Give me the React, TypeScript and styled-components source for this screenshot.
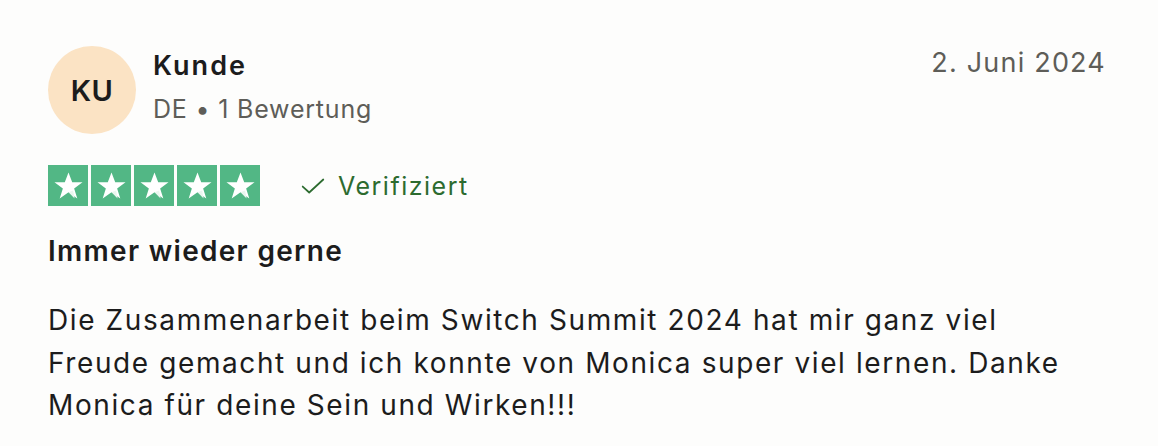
import React, { FC } from "react";
import styled, { createGlobalStyle } from "styled-components";

const GlobalStyle = createGlobalStyle`
  html, body {
    margin: 0;
    padding: 0;
    background: #fdfdfc;
  }
  * {
    box-sizing: border-box;
  }
`;

const StarIcon: FC = () => (
  <svg width="33" height="33" viewBox="0 0 24 24">
    <path
      d="M12 2.5l2.7 7.1h7.5l-6.1 4.5 2.3 7.3L12 16.9 5.6 21.4l2.3-7.3L1.8 9.6h7.5z"
      fill="#fff"
    />
    <path d="M12 16.9l3.4-1.2 1 5.7z" fill="#eaf6ef" />
  </svg>
);

const CheckIcon: FC = () => (
  <svg width="26" height="26" viewBox="0 0 24 24" fill="none">
    <path
      d="M2.5 12.5l6 5.5L21.5 6"
      stroke="#2c6b2f"
      strokeWidth="1.6"
      strokeLinecap="round"
      strokeLinejoin="round"
    />
  </svg>
);

const App: FC = () => {
  return (
    <>
      <GlobalStyle />
      <Review>
        <Header>
          <Avatar>KU</Avatar>
          <Consumer>
            <Name>Kunde</Name>
            <Meta>DE • 1 Bewertung</Meta>
          </Consumer>
          <Date>2. Juni 2024</Date>
        </Header>
        <RatingRow>
          <Stars>
            {[0, 1, 2, 3, 4].map((i) => (
              <StarBox key={i}>
                <StarIcon />
              </StarBox>
            ))}
          </Stars>
          <Verified>
            <CheckIcon />
            Verifiziert
          </Verified>
        </RatingRow>
        <Title>Immer wieder gerne</Title>
        <Body>
          Die Zusammenarbeit beim Switch Summit 2024 hat mir ganz viel
          <br />
          Freude gemacht und ich konnte von Monica super viel lernen. Danke
          <br />
          Monica für deine Sein und Wirken!!!
        </Body>
      </Review>
    </>
  );
};

export default App;

const Review = styled.article`
  width: 1158px;
  height: 446px;
  padding: 46px 52px 0 48px;
  font-family: Inter, "Noto Sans", sans-serif;
  color: #1c1c1c;
  display: flex;
  flex-direction: column;
`;

const Header = styled.header`
  display: flex;
  align-items: flex-start;
`;

const Avatar = styled.div`
  width: 88px;
  height: 88px;
  border-radius: 50%;
  background: #fbe3c4;
  display: flex;
  align-items: center;
  justify-content: center;
  font-size: 29px;
  font-weight: 600;
  letter-spacing: 0.5px;
  color: #1c1c1c;
  flex-shrink: 0;
`;

const Consumer = styled.div`
  margin-left: 17px;
  display: flex;
  flex-direction: column;
  padding-top: 3px;
`;

const Name = styled.div`
  font-size: 27px;
  font-weight: 600;
  line-height: 34px;
  letter-spacing: 2px;
`;

const Meta = styled.div`
  margin-top: 11px;
  font-size: 25px;
  line-height: 30px;
  letter-spacing: 0.8px;
  color: #5e5d58;
`;

const Date = styled.div`
  margin-left: auto;
  padding-top: 1px;
  font-size: 27px;
  line-height: 32px;
  letter-spacing: 1.2px;
  color: #5e5d58;
`;

const RatingRow = styled.div`
  display: flex;
  align-items: center;
  margin-top: 31px;
`;

const Stars = styled.div`
  display: flex;
  gap: 3px;
`;

const StarBox = styled.div`
  width: 40px;
  height: 41px;
  background: #52b785;
  display: flex;
  align-items: center;
  justify-content: center;
`;

const Verified = styled.div`
  display: flex;
  align-items: center;
  gap: 12px;
  margin-left: 40px;
  font-size: 25px;
  color: #2c6b2f;
  letter-spacing: 1.5px;
`;

const Title = styled.h2`
  margin: 28px 0 0;
  font-size: 28px;
  font-weight: 600;
  line-height: 34px;
  letter-spacing: 1.3px;
  color: #1c1c1c;
`;

const Body = styled.p`
  margin: 31px 0 0;
  font-size: 28px;
  line-height: 42.5px;
  letter-spacing: 1.6px;
  color: #1c1c1c;
`;
